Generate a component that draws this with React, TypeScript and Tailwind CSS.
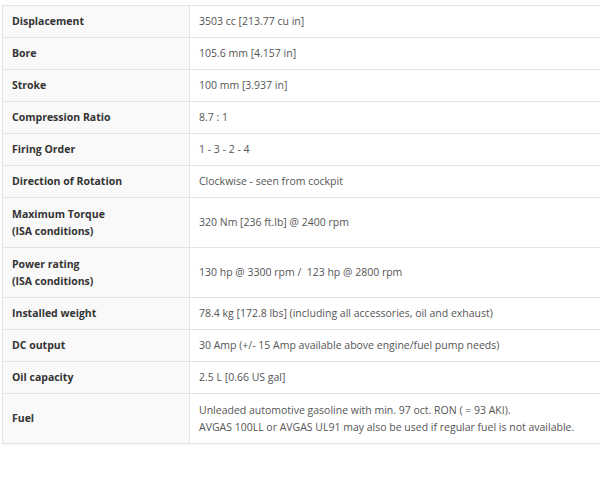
const specs: { label: string[]; value: string[] }[] = [
  { label: ["Displacement"], value: ["3503 cc [213.77 cu in]"] },
  { label: ["Bore"], value: ["105.6 mm [4.157 in]"] },
  { label: ["Stroke"], value: ["100 mm [3.937 in]"] },
  { label: ["Compression Ratio"], value: ["8.7 : 1"] },
  { label: ["Firing Order"], value: ["1 - 3 - 2 - 4"] },
  { label: ["Direction of Rotation"], value: ["Clockwise - seen from cockpit"] },
  { label: ["Maximum Torque", "(ISA conditions)"], value: ["320 Nm [236 ft.lb] @ 2400 rpm"] },
  { label: ["Power rating", "(ISA conditions)"], value: ["130 hp @ 3300 rpm /  123 hp @ 2800 rpm"] },
  { label: ["Installed weight"], value: ["78.4 kg [172.8 lbs] (including all accessories, oil and exhaust)"] },
  { label: ["DC output"], value: ["30 Amp (+/- 15 Amp available above engine/fuel pump needs)"] },
  { label: ["Oil capacity"], value: ["2.5 L [0.66 US gal]"] },
  {
    label: ["Fuel"],
    value: [
      "Unleaded automotive gasoline with min. 97 oct. RON ( = 93 AKI).",
      "AVGAS 100LL or AVGAS UL91 may also be used if regular fuel is not available.",
    ],
  },
];

export default function App() {
  return (
    <div className="w-[600px] h-[480px] bg-white overflow-hidden pt-[5px] pl-[2px] font-['Open_Sans',sans-serif] text-[10.5px] leading-[17px]">
      <div className="w-[610px] border-t border-l border-[#e3e3e3] shadow-[0_1px_2px_rgba(0,0,0,0.04)]">
        {specs.map((row) => {
          const tall = row.label.length > 1 || row.value.length > 1;
          return (
            <div
              key={row.label[0]}
              className={`flex border-b border-[#e3e3e3] ${tall ? "min-h-[50px]" : ""}`}
            >
              <div className="w-[187px] shrink-0 bg-[#f9f9f9] border-r border-[#e3e3e3] px-[9px] py-[7px] flex flex-col justify-center font-bold text-[#333]">
                {row.label.map((l) => (
                  <span key={l}>{l}</span>
                ))}
              </div>
              <div className="flex-1 px-[9px] py-[7px] flex flex-col justify-center text-[#555]">
                {row.value.map((v) => (
                  <span key={v} className="whitespace-pre">{v}</span>
                ))}
              </div>
            </div>
          );
        })}
      </div>
    </div>
  );
}
